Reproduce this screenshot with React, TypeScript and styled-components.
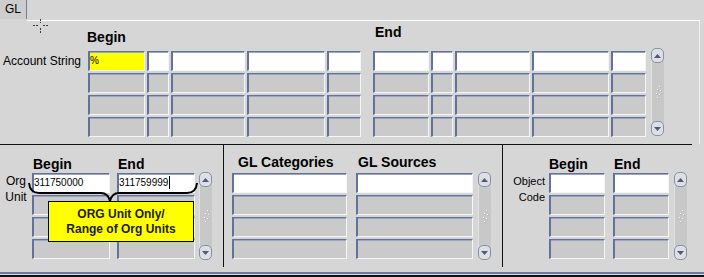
import React from 'react';
import styled, { createGlobalStyle } from 'styled-components';

const GlobalStyle = createGlobalStyle`
  html, body { margin: 0; padding: 0; background: #d6d6d6; }
  body { font-family: "Liberation Sans", Arial, sans-serif; }
`;

type Tone = 'white' | 'gray' | 'yellow';

const toneColor: Record<Tone, string> = {
  white: '#ffffff',
  gray: '#cacaca',
  yellow: '#ffff00',
};

const Screen = styled.div`
  position: relative;
  width: 704px;
  height: 277px;
  overflow: hidden;
  background: #d6d6d6;
  color: #000;
  font-family: "Liberation Sans", Arial, sans-serif;
`;

const TabStrip = styled.div`
  display: flex;
  align-items: flex-start;
  width: 700px;
  height: 21px;
`;

const Tab = styled.div`
  box-sizing: border-box;
  width: 27px;
  height: 19px;
  padding-left: 5px;
  background: #cdcdcd;
  border-right: 1px solid #6f7fa6;
  font-size: 12px;
  line-height: 19px;
`;

const TabFiller = styled.div`
  flex: 1;
  height: 20px;
  border-bottom: 1px solid #ffffff;
`;

const TopPanel = styled.div`
  box-sizing: border-box;
  display: flex;
  align-items: flex-start;
  width: 700px;
  height: 123px;
  border-right: 1px solid #efefef;
`;

const RowLabel = styled.div`
  box-sizing: border-box;
  width: 88px;
  margin-top: 30px;
  padding-left: 3px;
  font-size: 12px;
  line-height: 20px;
  white-space: nowrap;
`;

const StackLabel = styled.div<{ $width: number; $align: string; $size: number; $pad: number }>`
  box-sizing: border-box;
  width: ${(p) => p.$width}px;
  margin-top: 28px;
  padding-right: ${(p) => p.$pad}px;
  font-size: ${(p) => p.$size}px;
  line-height: 16px;
  text-align: ${(p) => p.$align};
`;

const Grid = styled.div<{ $cols: string; $gap: number; $head: number; $offset: number }>`
  display: grid;
  grid-template-columns: ${(p) => p.$cols};
  grid-template-rows: ${(p) => p.$head}px repeat(4, 20px);
  column-gap: ${(p) => p.$gap}px;
  row-gap: 2px;
  margin-left: ${(p) => p.$offset}px;
`;

const Heading = styled.div<{ $top: number; $indent: number; $span: number }>`
  grid-column: span ${(p) => p.$span};
  padding-top: ${(p) => p.$top}px;
  margin-left: ${(p) => p.$indent}px;
  font-weight: bold;
  font-size: 14px;
  line-height: 16px;
  white-space: nowrap;
`;

const Field = styled.div<{ $tone: Tone }>`
  box-sizing: border-box;
  height: 20px;
  background: ${(p) => toneColor[p.$tone]};
  border-style: solid;
  border-width: 1px 1px 1px 2px;
  border-color: #62729b #f6f6f6 #f6f6f6 #62729b;
  box-shadow: inset 0 1px 0 #9aa5c2;
  font-size: 10px;
  line-height: 18px;
  white-space: nowrap;
  overflow: hidden;
`;

const Caret = styled.span`
  display: inline-block;
  width: 1px;
  height: 13px;
  margin-left: 1px;
  vertical-align: -3px;
  background: #000;
`;

const Track = styled.div<{ $left: number }>`
  box-sizing: border-box;
  display: flex;
  flex-direction: column;
  justify-content: space-between;
  align-items: center;
  width: 13px;
  height: 88px;
  margin: 27px 0 0 ${(p) => p.$left}px;
  border-radius: 6px;
  background: #c8c8c8;
  box-shadow: inset 1px 0 0 #e2e2e2;
`;

const ArrowButton = styled.div`
  box-sizing: border-box;
  display: flex;
  align-items: center;
  justify-content: center;
  width: 13px;
  height: 15px;
  border: 1px solid #8391b3;
  border-radius: 5px;
  background: #dfdfdf;
`;

const HRule = styled.div`
  width: 692px;
  height: 1px;
  background: #111;
`;

const BottomSection = styled.div`
  display: flex;
  height: 127px;
`;

const SubPanel = styled.div<{ $width?: number; $pad: number }>`
  box-sizing: border-box;
  display: flex;
  align-items: flex-start;
  ${(p) => (p.$width ? `width: ${p.$width}px;` : 'flex: 1;')}
  padding-left: ${(p) => p.$pad}px;
`;

const Divider = styled.div`
  width: 1px;
  margin-bottom: 5px;
  background: #111;
`;

const Footer = styled.div`
  box-sizing: border-box;
  height: 5px;
  border-top: 2px solid #6a7aa0;
  border-bottom: 2px solid #111;
`;

const Callout = styled.div`
  position: absolute;
  left: 48px;
  top: 201px;
  box-sizing: border-box;
  display: flex;
  flex-direction: column;
  justify-content: center;
  width: 146px;
  height: 41px;
  background: #ffff00;
  border: 1px solid #000;
  color: #1c1c10;
  font-weight: bold;
  font-size: 12px;
  line-height: 15px;
  text-align: center;
`;

const Overlay = styled.svg`
  position: absolute;
  overflow: visible;
`;

type Cell = { tone?: Tone; text?: React.ReactNode };
type Head = { text: string; top: number; indent?: number; span?: number };

interface TableProps {
  widths: number[];
  gap: number;
  head: number;
  heads: Head[];
  firstRow?: Cell[];
  offset?: number;
}

const FieldTable = ({ widths, gap, head, heads, firstRow, offset = 0 }: TableProps) => (
  <Grid $cols={widths.map((w) => `${w}px`).join(' ')} $gap={gap} $head={head} $offset={offset}>
    {heads.map((h) => (
      <Heading key={h.text} $top={h.top} $indent={h.indent ?? 0} $span={h.span ?? 1}>
        {h.text}
      </Heading>
    ))}
    {[0, 1, 2, 3].flatMap((r) =>
      widths.map((_, c) => {
        const cell = r === 0 ? firstRow?.[c] : undefined;
        return (
          <Field key={`${r}-${c}`} $tone={cell?.tone ?? (r === 0 ? 'white' : 'gray')}>
            {cell?.text}
          </Field>
        );
      }),
    )}
  </Grid>
);

const Scroller = ({ left }: { left: number }) => (
  <Track $left={left}>
    <ArrowButton>
      <svg width="7" height="4" viewBox="0 0 7 4">
        <polygon points="0,4 3.5,0 7,4" fill="#4a5a85" />
      </svg>
    </ArrowButton>
    <svg width="8" height="14" viewBox="0 0 8 14">
      {[
        [5, 1],
        [3, 4],
        [6, 5],
        [2, 8],
        [5, 9],
        [3, 12],
      ].map(([x, y]) => (
        <g key={`${x}-${y}`}>
          <rect x={x + 0.6} y={y + 0.6} width="1" height="1" fill="#a8a8a8" />
          <rect x={x} y={y} width="1" height="1" fill="#f6f6f6" />
        </g>
      ))}
    </svg>
    <ArrowButton>
      <svg width="7" height="4" viewBox="0 0 7 4">
        <polygon points="0,0 3.5,4 7,0" fill="#4a5a85" />
      </svg>
    </ArrowButton>
  </Track>
);

const Crosshair = () => (
  <Overlay width="15" height="15" viewBox="33 19 15 15" style={{ left: 33, top: 19 }}>
    <g stroke="#3a3a3a" strokeWidth="1" strokeDasharray="2 1">
      <line x1="33" y1="25.5" x2="38" y2="25.5" />
      <line x1="43" y1="25.5" x2="48" y2="25.5" />
      <line x1="40.5" y1="19" x2="40.5" y2="23" />
      <line x1="40.5" y1="28" x2="40.5" y2="34" />
    </g>
  </Overlay>
);

const Brace = () => (
  <Overlay width="176" height="24" viewBox="26 180 176 24" style={{ left: 26, top: 180 }}>
    <path
      d="M29 183 Q30 193 39 193 L101 193 Q108 193 110 201 Q112 193 119 193 L187 193 Q196 193 197 183"
      fill="none"
      stroke="#000"
      strokeWidth="2"
    />
  </Overlay>
);

export default function App() {
  return (
    <Screen>
      <GlobalStyle />
      <TabStrip>
        <Tab>GL</Tab>
        <TabFiller />
      </TabStrip>

      <TopPanel>
        <RowLabel>Account String</RowLabel>
        <FieldTable
          widths={[57, 22, 74, 78, 34]}
          gap={2}
          head={28}
          heads={[{ text: 'Begin', top: 8, indent: -1, span: 5 }]}
          firstRow={[{ tone: 'yellow', text: '%' }]}
        />
        <FieldTable
          widths={[56, 22, 75, 77, 35]}
          gap={2}
          head={28}
          offset={12}
          heads={[{ text: 'End', top: 3, indent: 2, span: 5 }]}
        />
        <Scroller left={5} />
      </TopPanel>

      <HRule />

      <BottomSection>
        <SubPanel $width={223} $pad={0}>
          <StackLabel $width={32} $align="center" $size={12} $pad={0}>
            Org
            <br />
            Unit
          </StackLabel>
          <FieldTable
            widths={[78, 78]}
            gap={7}
            head={26}
            heads={[
              { text: 'Begin', top: 11, indent: 1 },
              { text: 'End', top: 11, indent: 1 },
            ]}
            firstRow={[
              { text: '311750000' },
              {
                text: (
                  <>
                    311759999
                    <Caret />
                  </>
                ),
              },
            ]}
          />
          <Scroller left={4} />
        </SubPanel>
        <Divider />
        <SubPanel $width={278} $pad={8}>
          <FieldTable
            widths={[115, 117]}
            gap={9}
            head={26}
            heads={[
              { text: 'GL Categories', top: 9, indent: 6 },
              { text: 'GL Sources', top: 9, indent: 2 },
            ]}
          />
          <Scroller left={5} />
        </SubPanel>
        <Divider />
        <SubPanel $pad={0}>
          <StackLabel $width={46} $align="right" $size={11} $pad={4}>
            Object
            <br />
            Code
          </StackLabel>
          <FieldTable
            widths={[56, 56]}
            gap={8}
            head={26}
            heads={[
              { text: 'Begin', top: 11 },
              { text: 'End', top: 11, indent: 1 },
            ]}
          />
          <Scroller left={5} />
        </SubPanel>
      </BottomSection>

      <Footer />

      <Crosshair />
      <Brace />
      <Callout>
        <span>ORG Unit Only/</span>
        <span>Range of Org Units</span>
      </Callout>
    </Screen>
  );
}
